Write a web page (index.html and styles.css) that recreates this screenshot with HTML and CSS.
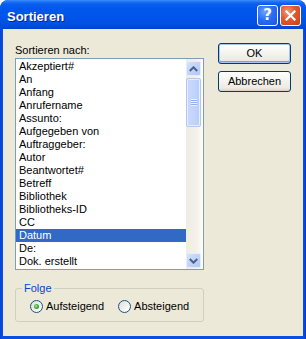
FILE: index.html
```html
<!DOCTYPE html>
<html>
<head>
<meta charset="utf-8">
<link rel="stylesheet" href="styles.css">
</head>
<body>
<div class="window">
  <div class="titlebar">
    <span class="title">Sortieren</span>
    <div class="tb-buttons">
      <div class="tb-btn help">?</div>
      <div class="tb-btn close">
        <svg width="11" height="11" viewBox="0 0 11 11"><path d="M1.5 1.5 L9.5 9.5 M9.5 1.5 L1.5 9.5" stroke="#fff" stroke-width="2.2" stroke-linecap="square"/></svg>
      </div>
    </div>
  </div>
  <div class="client">
    <div class="main">
      <div class="label">Sortieren nach:</div>
      <div class="listbox">
        <div class="items">
          <div class="item">Akzeptiert#</div>
          <div class="item">An</div>
          <div class="item">Anfang</div>
          <div class="item">Anrufername</div>
          <div class="item">Assunto:</div>
          <div class="item">Aufgegeben von</div>
          <div class="item">Auftraggeber:</div>
          <div class="item">Autor</div>
          <div class="item">Beantwortet#</div>
          <div class="item">Betreff</div>
          <div class="item">Bibliothek</div>
          <div class="item">Bibliotheks-ID</div>
          <div class="item">CC</div>
          <div class="item selected">Datum</div>
          <div class="item">De:</div>
          <div class="item">Dok. erstellt</div>
        </div>
        <div class="scrollbar">
          <div class="sb-btn">
            <svg width="9" height="6" viewBox="0 0 9 6"><path d="M0.8 5 L4.5 1.3 L8.2 5" fill="none" stroke="#4d6185" stroke-width="2"/></svg>
          </div>
          <div class="sb-thumb"><div class="grip"></div></div>
          <div class="sb-track"></div>
          <div class="sb-btn">
            <svg width="9" height="6" viewBox="0 0 9 6"><path d="M0.8 1 L4.5 4.7 L8.2 1" fill="none" stroke="#4d6185" stroke-width="2"/></svg>
          </div>
        </div>
      </div>
      <fieldset class="group">
        <legend>Folge</legend>
        <div class="radios">
          <label class="radio"><span class="dot checked"></span>Aufsteigend</label>
          <label class="radio second"><span class="dot"></span>Absteigend</label>
        </div>
      </fieldset>
    </div>
    <div class="side">
      <div class="btn default">OK</div>
      <div class="btn">Abbrechen</div>
    </div>
  </div>
</div>
</body>
</html>
```

FILE: styles.css
```css
html, body {
  margin: 0;
  padding: 0;
  background: #ffffff;
}
.window {
  width: 306px;
  height: 339px;
  display: flex;
  flex-direction: column;
  background: linear-gradient(to right, #0841d4, #0a4fe4 2px, #0a4fe4 calc(100% - 2px), #0831c8);
  border-radius: 8px 8px 0 0;
  overflow: hidden;
  font-family: "Liberation Sans", Arial, sans-serif;
  font-size: 11px;
  color: #000;
}
.titlebar {
  height: 29px;
  flex: none;
  display: flex;
  align-items: center;
  padding-left: 7px;
  background: linear-gradient(#3d8ffc 0, #1b6ff5 2px, #0a5ef0 4px, #0058ee 8px, #0055ea 16px, #0050e3 24px, #0047d8 28px, #003fc9 29px);
  border-radius: 8px 8px 0 0;
}
.title {
  flex: 1;
  padding-top: 4px;
  color: #fff;
  font-weight: bold;
  font-size: 13px;
  line-height: 15px;
  text-shadow: 1px 1px 0 #0a1e8c;
}
.tb-buttons {
  display: flex;
  gap: 2px;
  margin-right: 5px;
  margin-top: 1px;
}
.tb-btn {
  width: 19px;
  height: 19px;
  border: 1px solid #fff;
  border-radius: 3px;
  display: flex;
  align-items: center;
  justify-content: center;
  color: #fff;
  font-weight: bold;
  font-size: 15px;
}
.help {
  background: radial-gradient(circle at 35% 30%, #6ba3ff 0, #2a6ff5 45%, #1a55e0 100%);
  font-family: "DejaVu Sans", sans-serif;
  font-size: 15px;
  line-height: 19px;
}
.close {
  background: radial-gradient(circle at 35% 30%, #f0977a 0, #e0582f 45%, #c4401a 100%);
}
.client {
  flex: 1;
  margin: 0 3px 3px;
  background: #ece9d8;
  display: flex;
  gap: 14px;
  padding: 14px 12px 0 12px;
}
.main {
  width: 189px;
  display: flex;
  flex-direction: column;
}
.label {
  line-height: 13px;
  margin: 1px 0 1px;
}
.listbox {
  height: 210px;
  border: 1px solid #7f9db9;
  background: #fff;
  display: flex;
}
.items {
  flex: 1;
  padding-top: 1px;
  overflow: hidden;
}
.item {
  height: 13px;
  line-height: 13px;
  padding-left: 3px;
  white-space: nowrap;
}
.item.selected {
  background: #316ac5;
  color: #fff;
}
.scrollbar {
  width: 17px;
  display: flex;
  flex-direction: column;
  padding: 2px 0 1px;
  box-sizing: border-box;
  background: linear-gradient(to right, #eeede5, #f3f1e9 60%, #fbfaf6 90%, #ffffff);
}
.sb-btn {
  height: 15px;
  width: 15px;
  box-sizing: border-box;
  border: 1px solid #e6eefc;
  border-radius: 2px;
  background: linear-gradient(135deg, #d6e2fc, #c1d3fb 50%, #b2c7f6);
  display: flex;
  align-items: center;
  justify-content: center;
  flex: none;
}
.sb-thumb {
  margin-top: 2px;
  height: 49px;
  width: 15px;
  box-sizing: border-box;
  border: 1px solid #b4c7f2;
  border-radius: 2px;
  background: linear-gradient(to right, #c9d8fd, #c3d4fc 50%, #b8ccf9);
  box-shadow: inset 0 0 0 1px #e6eefc;
  display: flex;
  align-items: center;
  justify-content: center;
  flex: none;
}
.grip {
  width: 6px;
  height: 7px;
  background: repeating-linear-gradient(#eef4fe 0, #eef4fe 1px, #8cb0f8 1px, #8cb0f8 2px);
}
.sb-track {
  flex: 1;
}
.group {
  margin: 12px 0 0;
  padding: 5px 6px 8px;
  border: 1px solid #d0d0bf;
  border-radius: 3px;
  min-width: 0;
}
.group legend {
  padding: 0 2px;
  line-height: 13px;
  color: #0046d5;
}
.radios {
  display: flex;
  height: 13px;
  align-items: center;
}
.radio {
  display: flex;
  align-items: center;
  line-height: 13px;
  margin-left: 8px;
}
.radio.second {
  margin-left: 14px;
}
.dot {
  width: 11px;
  height: 11px;
  border: 1px solid #1c5180;
  border-radius: 50%;
  background: linear-gradient(135deg, #dcdcd3, #f4f4ef 60%, #ffffff);
  margin-right: 3px;
  display: flex;
  align-items: center;
  justify-content: center;
}
.dot.checked::after {
  content: "";
  width: 5px;
  height: 5px;
  border-radius: 50%;
  background: radial-gradient(circle at 40% 40%, #a6e6a0 0, #3fb33f 45%, #1f8a1f 100%);
}
.side {
  width: 73px;
  display: flex;
  flex-direction: column;
  gap: 7px;
}
.btn {
  height: 21px;
  box-sizing: border-box;
  border: 1px solid #003c74;
  border-radius: 3px;
  background: linear-gradient(#ffffff, #f6f5f1 40%, #eceae2 85%, #d6d0c5);
  display: flex;
  align-items: center;
  justify-content: center;
  line-height: 13px;
}
.btn.default {
  box-shadow: inset 0 0 0 1px #a8c4f0, inset 0 -1px 0 1px #7fa0e4;
}
```
